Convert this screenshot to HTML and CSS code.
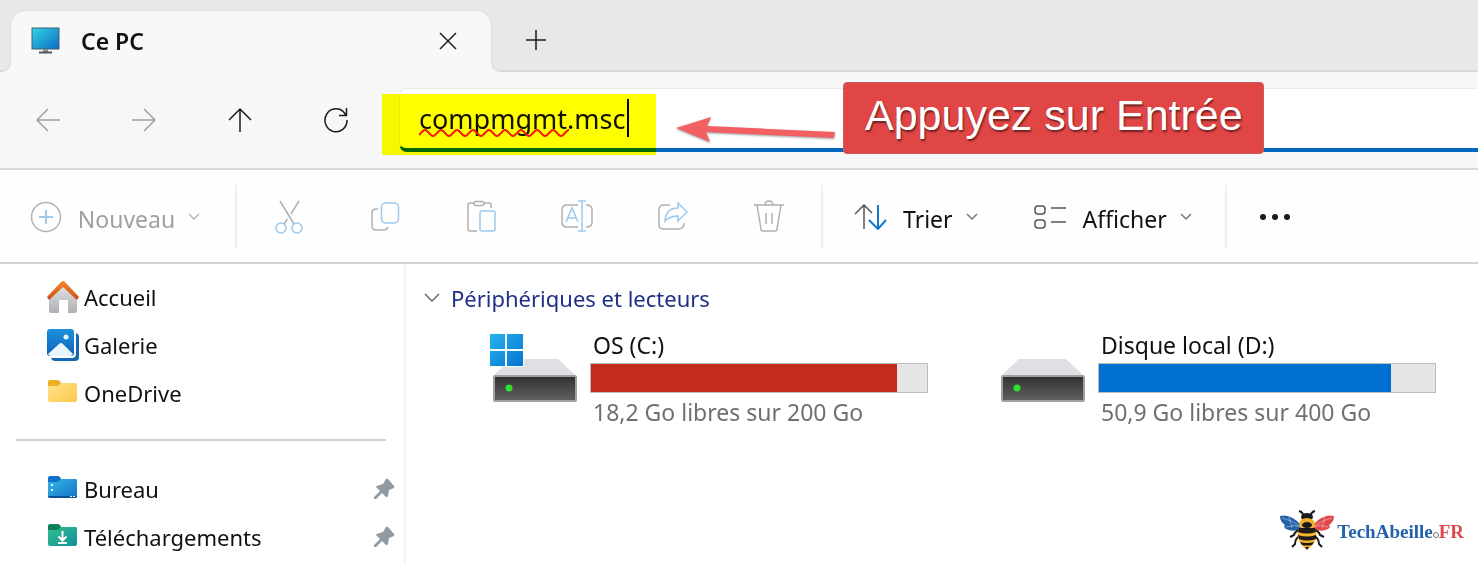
FILE: index.html
```html
<!DOCTYPE html>
<html lang="fr">
<head>
  <meta charset="UTF-8">
  <title>Ce PC</title>
  <link rel="stylesheet" href="styles.css">
</head>
<body>

  <header class="tabs">
    <div class="tab">
      <svg class="tab-icon" width="30" height="28" viewBox="0 0 30 28">
        <defs>
          <linearGradient id="screen" x1="0" y1="0" x2="1" y2="1">
            <stop offset="0" stop-color="#35d3e6"/>
            <stop offset="1" stop-color="#0c6cc4"/>
          </linearGradient>
        </defs>
        <rect x="1" y="1" width="27" height="21" fill="url(#screen)" stroke="#41606e"/>
        <path d="M12 22h5v3h-5z" fill="#8a8f94"/>
        <path d="M8 24.500h13v2H8z" fill="#54585c"/>
      </svg>
      <span class="tab-title">Ce PC</span>
      <button class="tab-close" aria-label="Fermer l'onglet">
        <svg width="18" height="18" viewBox="0 0 18 18"><path d="M1 1l16 16M17 1L1 17"/></svg>
      </button>
    </div>
    <button class="tab-new" aria-label="Nouvel onglet">
      <svg width="20" height="20" viewBox="0 0 20 20"><path d="M10 0v20M0 10h20"/></svg>
    </button>
  </header>

  <nav class="navbar">
    <button class="nav-btn off" aria-label="Précédent">
      <svg width="26" height="26" viewBox="0 0 26 26"><path d="M25 13H2M13 2L2 13l11 11"/></svg>
    </button>
    <button class="nav-btn off" aria-label="Suivant">
      <svg width="26" height="26" viewBox="0 0 26 26"><path d="M1 13h23M13 2l11 11-11 11"/></svg>
    </button>
    <button class="nav-btn" aria-label="Dossier parent">
      <svg width="26" height="26" viewBox="0 0 26 26"><path d="M13 25V2M2 13L13 2l11 11"/></svg>
    </button>
    <button class="nav-btn" aria-label="Actualiser">
      <svg width="26" height="26" viewBox="0 0 26 26"><path d="M24 13A11 11.500 0 1 1 21.500 6L23 8.500M23.500 1v7.500H16"/></svg>
    </button>
    <div class="address">
      <input class="address-input" type="text" value="compmgmt.msc" aria-label="Adresse" spellcheck="false">
      <svg class="squiggle" width="150" height="12" viewBox="0 0 150 12">
        <path d="M0 8l4-4q2-2 4 0l4 4q2 2 4 0l4-4q2-2 4 0l4 4q2 2 4 0l4-4q2-2 4 0l4 4q2 2 4 0l4-4q2-2 4 0l4 4q2 2 4 0l4-4q2-2 4 0l4 4q2 2 4 0l4-4q2-2 4 0l4 4q2 2 4 0l4-4q2-2 4 0l4 4q2 2 4 0l4-4q2-2 4 0l4 4q2 2 4 0l4-4q2-2 4 0l4 4q2 2 4 0l4-4q2-2 4 0"/>
      </svg>
      <span class="caret"></span>
      <span class="marker"></span>
      <svg class="arrow" width="164" height="28" viewBox="0 0 164 28">
        <path d="M2 13L37 2l-4 9 128 6-1 6-128-6 4 10z"/>
      </svg>
      <div class="callout">Appuyez sur Entrée</div>
    </div>
  </nav>

  <div class="toolbar">
    <button class="tool tool-new off">
      <svg width="32" height="32" viewBox="0 0 32 32"><circle cx="16" cy="16" r="14.500"/><path class="blue" d="M16 9v14M9 16h14"/></svg>
      <span class="tool-label">Nouveau</span>
      <svg class="chevron" width="14" height="8" viewBox="0 0 14 8"><path d="M2 1l5 5 5-5"/></svg>
    </button>
    <div class="tool-group">
      <button class="tool-icon off" aria-label="Couper">
        <svg width="32" height="34" viewBox="0 0 32 34"><path d="M7 1l14 23M26 1l-8 13M14.500 19L11 24"/><circle class="blue" cx="8" cy="28" r="5"/><circle class="blue" cx="24" cy="28" r="5"/></svg>
      </button>
      <button class="tool-icon off" aria-label="Copier">
        <svg width="32" height="34" viewBox="0 0 32 34"><path d="M9 9H7q-4 0-4 4v13q0 4 4 4h7q4 0 5-3"/><rect class="blue" x="12.500" y="3" width="17" height="20" rx="4"/></svg>
      </button>
      <button class="tool-icon off" aria-label="Coller">
        <svg width="32" height="34" viewBox="0 0 32 34"><path d="M9 3H5q-2 0-2 2v24q0 2 2 2h7M18 3h6q2 0 2 2v3"/><rect x="9" y="1.500" width="10" height="4" rx="2"/><rect class="blue" x="15" y="11" width="15" height="20" rx="2"/></svg>
      </button>
      <button class="tool-icon off" aria-label="Renommer">
        <svg width="34" height="34" viewBox="0 0 34 34"><path d="M18 5H7q-5 0-5 5v12q0 5 5 5h11M26 5q6 0 6 5v12q0 5-6 5"/><path class="blue" d="M6 22l6-14 6 14M8.500 18h7M22 1v30M18 1h8M18 31h8"/></svg>
      </button>
      <button class="tool-icon off" aria-label="Partager">
        <svg width="32" height="34" viewBox="0 0 32 34"><path d="M13 5H7q-5 0-5 5v15q0 4 5 4h14q6 0 6-6"/><path class="blue" d="M8 21q1-13 13-13V3l9 9-9 9v-5q-8 0-13 5z"/></svg>
      </button>
      <button class="tool-icon off" aria-label="Supprimer">
        <svg width="32" height="34" viewBox="0 0 32 34"><path d="M1 5h30M4 5l4 24q0 2 2 2h12q2 0 2-2l4-24M12 5q0-4 4-4t4 4M13 13v11M19 13v11"/></svg>
      </button>
    </div>
    <button class="tool tool-sort">
      <svg width="34" height="26" viewBox="0 0 34 26"><path d="M11 25V1M2 10l9-9 8 8"/><path class="blue" d="M25 1v24M16 16l9 9 8-9"/></svg>
      <span class="tool-label">Trier</span>
      <svg class="chevron" width="14" height="8" viewBox="0 0 14 8"><path d="M2 1l5 5 5-5"/></svg>
    </button>
    <button class="tool tool-view">
      <svg width="34" height="26" viewBox="0 0 34 26"><rect x="2" y="2" width="10" height="8" rx="3"/><rect x="2" y="16" width="10" height="8" rx="3"/><path d="M18 4h15M18 18h15"/></svg>
      <span class="tool-label">Afficher</span>
      <svg class="chevron" width="14" height="8" viewBox="0 0 14 8"><path d="M2 1l5 5 5-5"/></svg>
    </button>
    <button class="tool-more" aria-label="Plus d'options">
      <svg width="32" height="8" viewBox="0 0 32 8"><circle cx="4" cy="4" r="3"/><circle cx="16" cy="4" r="3"/><circle cx="28" cy="4" r="3"/></svg>
    </button>
  </div>

  <div class="content">
    <aside class="sidebar">
      <a class="place" href="#">
        <svg width="32" height="32" viewBox="0 0 32 32">
          <defs>
            <linearGradient id="wall" x1="0" y1="0" x2="0" y2="1">
              <stop offset="0" stop-color="#e6e6e8"/>
              <stop offset="1" stop-color="#adafb3"/>
            </linearGradient>
            <linearGradient id="roof" x1="0" y1="0" x2="0" y2="1">
              <stop offset="0" stop-color="#f58a2c"/>
              <stop offset="1" stop-color="#cf4a12"/>
            </linearGradient>
          </defs>
          <path d="M2 15L16 3l14 12v15q0 2-2 2h-7V20q0-1-1-1h-7q-1 0-1 1v12H4q-2 0-2-2z" fill="url(#wall)"/>
          <path d="M0 16L14 1q2-2 4 0l14 15-2 3L16 6 2 19z" fill="url(#roof)"/>
        </svg>
        Accueil
      </a>
      <a class="place" href="#">
        <svg width="32" height="32" viewBox="0 0 32 32">
          <defs>
            <linearGradient id="photo" x1="0" y1="0" x2="0" y2="1">
              <stop offset="0" stop-color="#1c93dd"/>
              <stop offset="1" stop-color="#0b62b8"/>
            </linearGradient>
          </defs>
          <path d="M29 4q3 1 3 4v20q0 4-4 4H8q-3 0-4-3h21q4 0 4-4z" fill="#1567b3"/>
          <rect width="27" height="27" rx="3" fill="url(#photo)"/>
          <path d="M1 25L12 15q2-2 4 0l10 10q-1 2-3 2H4q-2 0-3-2z" fill="#e9f5fc"/>
          <circle cx="19" cy="8" r="2.500" fill="#e9f5fc"/>
        </svg>
        Galerie
      </a>
      <a class="place" href="#">
        <svg width="32" height="32" viewBox="0 0 32 32">
          <defs>
            <linearGradient id="folder" x1="0" y1="0" x2="1" y2="1">
              <stop offset="0" stop-color="#ffe48e"/>
              <stop offset="1" stop-color="#fbc94a"/>
            </linearGradient>
          </defs>
          <path d="M1 5q0-2 2-2h8q2 0 3 3h14q2 0 2 2v4H1z" fill="#eeb022"/>
          <path d="M1 9h9q2 0 4-3h14q2 0 2 2v15q0 2-2 2H3q-2 0-2-2z" fill="url(#folder)"/>
        </svg>
        OneDrive
      </a>
      <hr class="divider">
      <a class="place" href="#">
        <svg width="32" height="32" viewBox="0 0 32 32">
          <defs>
            <linearGradient id="desk" x1="0" y1="0" x2="1" y2="1">
              <stop offset="0" stop-color="#38b8e9"/>
              <stop offset="1" stop-color="#1270c4"/>
            </linearGradient>
          </defs>
          <path d="M1 5q0-2 2-2h8q2 0 3 3h14q2 0 2 2v4H1z" fill="#1070c8"/>
          <path d="M1 9h9q2 0 4-3h14q2 0 2 2v15q0 2-2 2H3q-2 0-2-2z" fill="url(#desk)"/>
          <path d="M1 23h29q0 2-2 2H3q-2 0-2-2z" fill="#0d4f96"/>
          <path d="M4 11h2v2H4zM4 16h2v2H4zM23 23h2v1h-2zM26 23h2v1h-2z" fill="#e4f5ff"/>
        </svg>
        Bureau
        <svg class="pin" width="22" height="22" viewBox="0 0 22 22"><path d="M13 1q1-1 2 0l6 7q1 1 0 2l-5 2-1 6q-1 2-2 1l-4-4-6 6H1v-2l6-6-4-4q0-1 1-1l6-2z"/></svg>
      </a>
      <a class="place" href="#">
        <svg width="32" height="32" viewBox="0 0 32 32">
          <defs>
            <linearGradient id="down" x1="0" y1="0" x2="1" y2="1">
              <stop offset="0" stop-color="#35c08c"/>
              <stop offset="1" stop-color="#0f8f9c"/>
            </linearGradient>
          </defs>
          <path d="M1 5q0-2 2-2h8q2 0 3 3h14q2 0 2 2v4H1z" fill="#0c7f5c"/>
          <path d="M1 9h9q2 0 4-3h14q2 0 2 2v15q0 2-2 2H3q-2 0-2-2z" fill="url(#down)"/>
          <path d="M15.500 10v9M11.500 15.500l4 4 4-4M11 22h9" fill="none" stroke="#fff" stroke-width="2"/>
        </svg>
        Téléchargements
        <svg class="pin" width="22" height="22" viewBox="0 0 22 22"><path d="M13 1q1-1 2 0l6 7q1 1 0 2l-5 2-1 6q-1 2-2 1l-4-4-6 6H1v-2l6-6-4-4q0-1 1-1l6-2z"/></svg>
      </a>
    </aside>

    <main class="main">
      <h1 class="group-title">
        <svg width="16" height="10" viewBox="0 0 16 10"><path d="M1 1l7 7 7-7"/></svg>
        Périphériques et lecteurs
      </h1>
      <div class="drives">
        <div class="drive">
          <svg class="drive-icon" width="88" height="74" viewBox="0 0 88 74">
            <defs>
              <linearGradient id="box" x1="0" y1="0" x2="0" y2="1">
                <stop offset="0" stop-color="#303030"/>
                <stop offset="1" stop-color="#626262"/>
              </linearGradient>
              <linearGradient id="win" x1="0" y1="0" x2="1" y2="1">
                <stop offset="0" stop-color="#27b4ee"/>
                <stop offset="1" stop-color="#0672d0"/>
              </linearGradient>
            </defs>
            <path d="M21 30h47l18 17H3z" fill="#dfe0e3"/>
            <rect x="4" y="47" width="82" height="25" rx="1" fill="url(#box)" stroke="#a0a0a0" stroke-width="2"/>
            <circle cx="19" cy="59" r="3.500" fill="#2fe02f"/>
            <path d="M-1 4h35v34H-1z" fill="#f4fbff"/>
            <path d="M0 5h15v15H0zM17 5h16v15H17zM0 22h15v15H0zM17 22h16v15H17z" fill="url(#win)"/>
          </svg>
          <div class="drive-info">
            <div class="drive-name">OS (C:)</div>
            <div class="gauge"><div class="gauge-fill full" style="width: 91%"></div></div>
            <div class="drive-free">18,2 Go libres sur 200 Go</div>
          </div>
        </div>
        <div class="drive">
          <svg class="drive-icon" width="88" height="74" viewBox="0 0 88 74">
            <path d="M21 30h47l18 17H3z" fill="#dfe0e3"/>
            <rect x="4" y="47" width="82" height="25" rx="1" fill="url(#box)" stroke="#a0a0a0" stroke-width="2"/>
            <circle cx="19" cy="59" r="3.500" fill="#2fe02f"/>
          </svg>
          <div class="drive-info">
            <div class="drive-name">Disque local (D:)</div>
            <div class="gauge"><div class="gauge-fill" style="width: 87%"></div></div>
            <div class="drive-free">50,9 Go libres sur 400 Go</div>
          </div>
        </div>
      </div>
    </main>
  </div>

  <div class="logo">
    <svg width="56" height="42" viewBox="0 0 56 42">
      <path d="M23 17Q12 4 1 7q0 6 5 9-2 2 1 4 8 4 16-1z" fill="#2560a8"/>
      <path d="M33 17Q44 4 55 7q0 6-5 9 2 2-1 4-8 4-16-1z" fill="#e2474b"/>
      <path d="M3 9q10 2 19 9M7 18q8-3 15 0M10 8l3 11M53 9q-10 2-19 9M49 18q-8-3-15 0M46 8l-3 11" fill="none" stroke="#fff" stroke-width=".4"/>
      <path d="M25 8q-1-5-5-6M31 8q1-5 5-6M22 20q-6 2-7 6l-4 2M34 20q6 2 7 6l4 2M21 26q-5 4-5 9l-3 3M35 26q5 4 5 9l3 3" fill="none" stroke="#1d1a1a" stroke-width="2"/>
      <ellipse cx="28" cy="8" rx="6" ry="4" fill="#1d1a1a"/>
      <ellipse cx="28" cy="15" rx="8" ry="6" fill="#f0ae2d"/>
      <ellipse cx="28" cy="16" rx="5" ry="3" fill="#1d1a1a"/>
      <path d="M20 19h16q5 12-8 22-13-10-8-22z" fill="#f5b52f"/>
      <path d="M20 19h16l1 4q-9 3-18 0zM19 26q9 3 18 0v4q-9 3-17 0zM21 33q7 2 14 0l-2 3q-5 1-10 0zM26 38h4l-2 3z" fill="#1d1a1a"/>
    </svg>
    <span class="logo-text">TechAbeille<i class="logo-dot"></i><b>FR</b></span>
  </div>

</body>
</html>
```

FILE: styles.css
```css
* {
  box-sizing: border-box;
}
body {
  margin: 0;
  min-height: 100vh;
  position: relative;
  display: flex;
  flex-direction: column;
  background-color: #fff;
  color: #111;
  font-family: "Noto Sans", "Open Sans", sans-serif;
  font-size: 23px;
  line-height: 32px;
}
button {
  display: flex;
  align-items: center;
  justify-content: center;
  padding: 0;
  border: none;
  background: none;
  color: inherit;
  font: inherit;
  cursor: pointer;
}
svg {
  flex: none;
}
button svg {
  fill: none;
  stroke: #1b1b1b;
  stroke-width: 1.500;
}

/* onglets */
.tabs {
  display: flex;
  height: 72px;
  padding: 10px 0 0 10px;
  background-color: #e8e8e8;
  border-bottom: 2px solid #dadada;
}
.tab {
  position: relative;
  display: flex;
  align-items: center;
  width: 482px;
  height: 62px;
  padding: 0 34px 2px 20px;
  background-color: #f8f8f8;
  border: 1px solid #dfdfdf;
  border-bottom: none;
  border-radius: 16px 16px 0 0;
}
/* raccord arrondi au pied de l'onglet */
.tab::before, .tab::after {
  content: "";
  position: absolute;
  bottom: 0;
  width: 8px;
  height: 8px;
}
.tab::before {
  left: -8px;
  background: radial-gradient(circle at 0 0, #e8e8e8 6px, #dadada 7px, #f8f8f8 8px);
}
.tab::after {
  right: -8px;
  background: radial-gradient(circle at 100% 0, #e8e8e8 6px, #dadada 7px, #f8f8f8 8px);
}
.tab-title {
  flex: 1;
  padding-left: 20px;
  font-weight: 600;
}
.tab-new {
  width: 88px;
}
.nav-btn svg {
  stroke-linejoin: round;
}

/* navigation */
.navbar {
  display: flex;
  align-items: center;
  height: 98px;
  background-color: #f7f7f7;
  border-bottom: 2px solid #d8d8d8;
}
.nav-btn {
  width: 96px;
  height: 64px;
}
.off {
  color: #a0a0a0;
}
.off svg {
  stroke: #a0a0a0;
}
.address {
  position: relative;
  flex: 1;
  margin-left: 15px;
}
.address-input {
  display: block;
  width: 100%;
  height: 64px;
  padding: 0 19px;
  border: 1px solid #ececec;
  border-right: none;
  border-bottom: 4px solid #0067c0;
  border-radius: 8px 0 0 8px;
  background-color: #fff;
  color: #111;
  font: inherit;
  font-size: 27px;
  outline: none;
}
.squiggle {
  position: absolute;
  left: 20px;
  top: 39px;
  fill: none;
  stroke: #f21d0c;
  stroke-width: 2;
}
.caret {
  position: absolute;
  left: 228px;
  top: 11px;
  width: 2px;
  height: 38px;
  background-color: #000;
}
.marker {
  position: absolute;
  left: -17px;
  top: 6px;
  width: 274px;
  height: 61px;
  background-color: #ff0;
  mix-blend-mode: multiply;
}
.arrow {
  position: absolute;
  left: 275px;
  top: 27px;
  fill: #f45f62;
  filter: drop-shadow(0 1px 1px #999);
}
.callout {
  position: absolute;
  left: 444px;
  top: -6px;
  padding: 7px 20px 13px 21px;
  border: 1px solid #cf5a5a;
  border-radius: 4px;
  background-color: #e04646;
  color: #fff;
  font-family: "Liberation Sans", Arial, sans-serif;
  font-size: 43px;
  line-height: 50px;
  white-space: nowrap;
  text-shadow: 1px 2px 2px #6d2020;
}

/* barre d'outils */
.toolbar {
  display: flex;
  align-items: center;
  height: 94px;
  padding-top: 2px;
  background-color: #fefefe;
  border-bottom: 2px solid #d4d4d4;
}
.tool {
  height: 64px;
  gap: 16px;
}
.tool svg {
  stroke: #555;
}
.tool-label {
  padding-top: 3px;
}
.tool .chevron {
  margin-left: -4px;
  stroke: #777;
}
.tool .blue {
  stroke: #0f78d0;
  stroke-width: 2;
}
.off.tool svg {
  stroke: #b4b4b4;
}
.off .blue, .off.tool .blue {
  stroke: #9cc9ec;
}
.off.tool-icon svg {
  stroke: #b0b0b0;
}
.tool-new {
  width: 235px;
  padding-right: 4px;
}
.tool-group {
  display: flex;
  padding: 0 4px;
  border-left: 2px solid #eee;
  border-right: 2px solid #eee;
}
.tool-icon {
  width: 96px;
  height: 64px;
}
.tool-sort {
  margin-left: 30px;
}
.tool-view {
  margin-left: 54px;
}
.tool-more {
  width: 98px;
  height: 64px;
  margin-left: 32px;
  border-left: 2px solid #eee;
}
.tool-more svg {
  fill: #1b1b1b;
  stroke: none;
}

/* contenu */
.content {
  flex: 1;
  display: flex;
}
.sidebar {
  width: 406px;
  padding-top: 9px;
  border-right: 2px solid #f4f4f4;
  font-size: 22px;
}
.place {
  display: flex;
  align-items: center;
  gap: 5px;
  height: 48px;
  padding: 0 9px 0 47px;
  color: #111;
  text-decoration: none;
}
.pin {
  margin-left: auto;
  fill: #929a9f;
}
.divider {
  height: 2px;
  margin: 22px 18px 24px 16px;
  border: none;
  background-color: #d0d0d0;
}
.main {
  flex: 1;
  padding: 18px 0 0 18px;
}
.group-title {
  display: flex;
  align-items: center;
  gap: 11px;
  margin: 0;
  color: #1f2f86;
  font-size: 22px;
  font-weight: 400;
}
.group-title svg {
  fill: none;
  stroke: #666;
  stroke-width: 1.500;
}
.drives {
  display: grid;
  grid-template-columns: repeat(auto-fill, 438px);
  gap: 20px 70px;
  padding: 15px 0 0 66px;
}
.drive {
  display: flex;
  gap: 12px;
}
.drive-info {
  flex: 1;
}
.drive-name, .drive-free {
  padding-left: 3px;
}
.drive-free {
  margin-top: 3px;
  color: #707070;
}
.gauge {
  height: 30px;
  margin-top: 2px;
  border: 1px solid #bcbcbc;
  background-color: #e6e6e6;
}
.gauge-fill {
  height: 100%;
  background-color: #0070d0;
}
.gauge-fill.full {
  background-color: #c42b1c;
}

/* logo */
.logo {
  position: absolute;
  right: 14px;
  bottom: 12px;
  display: flex;
  align-items: center;
  gap: 2px;
}
.logo-text {
  padding-top: 4px;
  color: #2262a8;
  font-family: "Liberation Serif", "Times New Roman", serif;
  font-size: 19px;
  font-weight: 700;
}
.logo-text b {
  color: #e2474b;
}
.logo-dot {
  display: inline-block;
  width: 6px;
  height: 6px;
  border: 1px solid #777;
  border-radius: 50%;
}
```
